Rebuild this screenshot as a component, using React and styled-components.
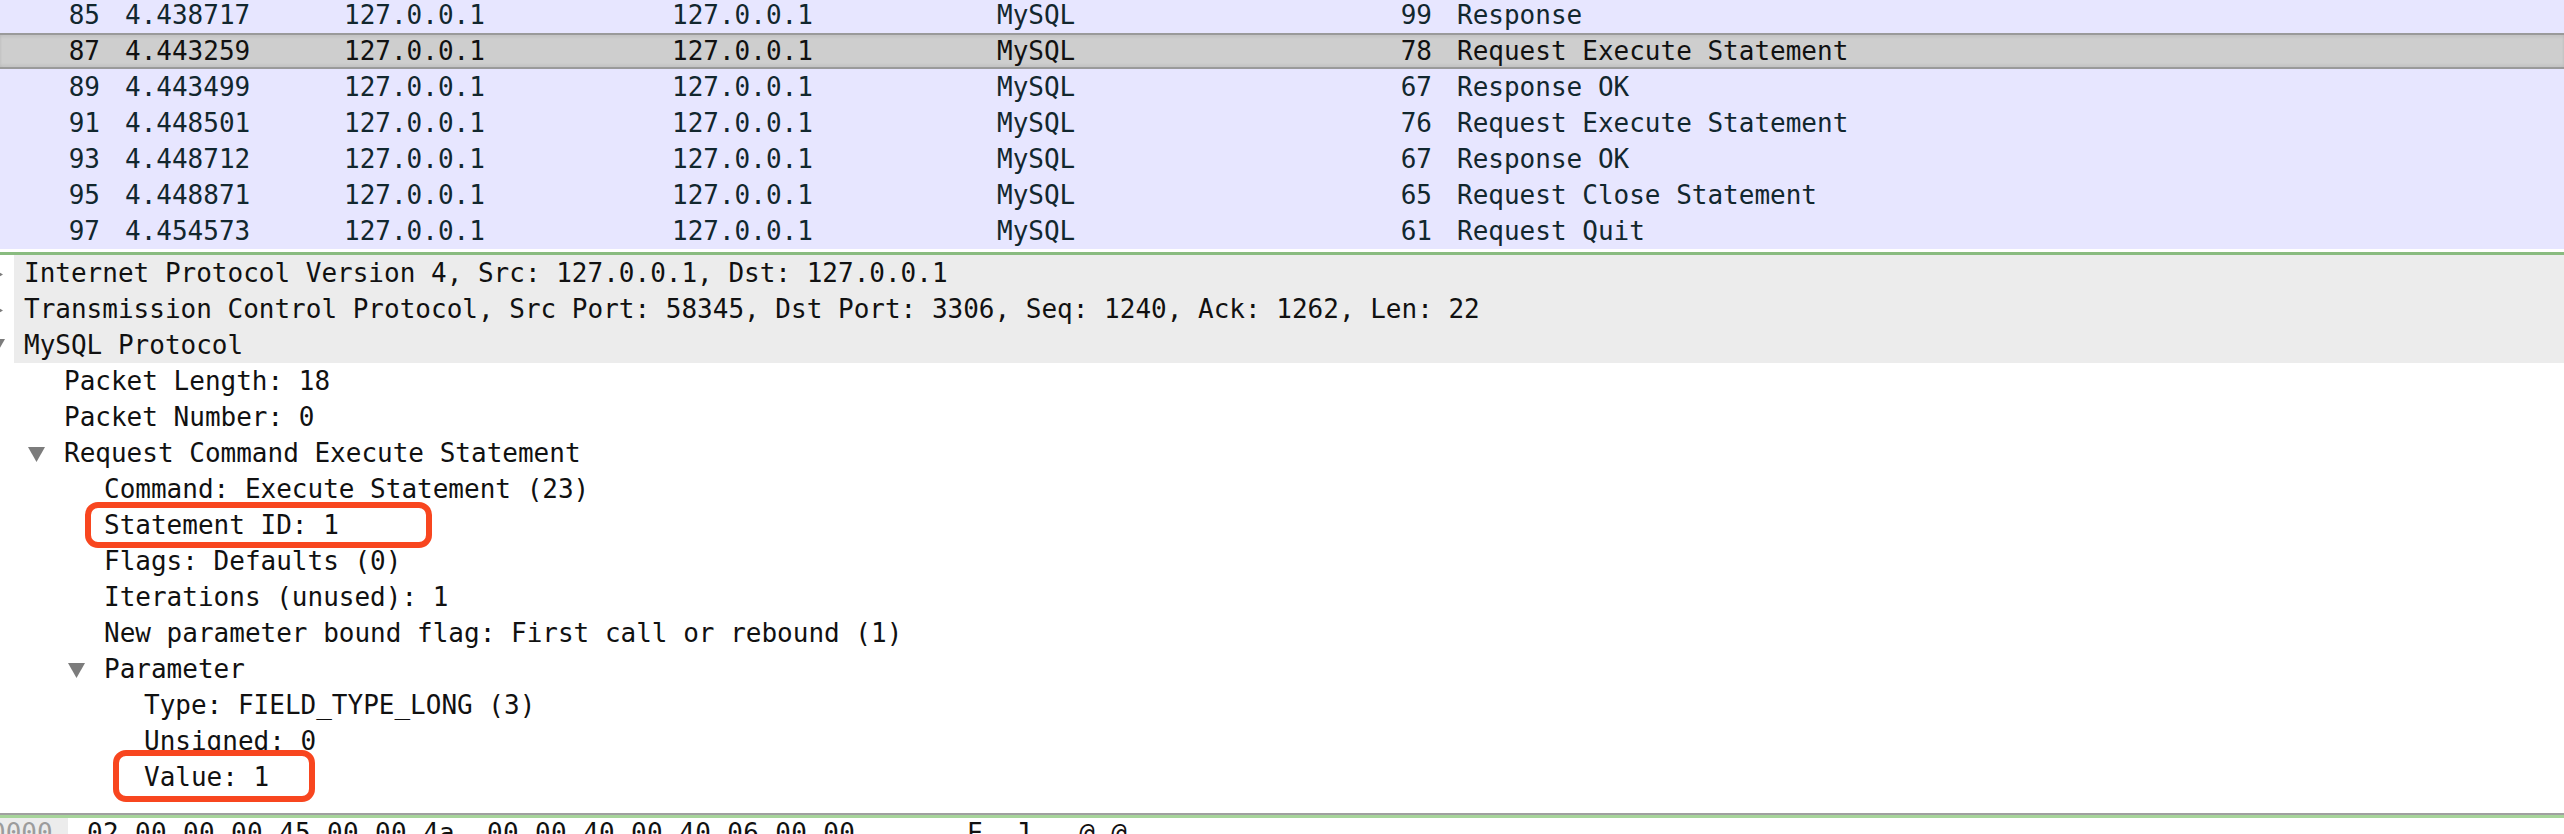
import styled, { createGlobalStyle } from "styled-components";

const GlobalStyle = createGlobalStyle`
  html, body {
    margin: 0;
    padding: 0;
    background: #ffffff;
    overflow: hidden;
  }
  body {
    font-family: "DejaVu Sans Mono", "Liberation Mono", monospace;
    font-size: 26px;
  }
`;

const Window = styled.div`
  width: 2564px;
  height: 834px;
  display: flex;
  flex-direction: column;
  overflow: hidden;
  background: #ffffff;
`;

const PacketList = styled.div`
  margin-top: -3px;
  background: #e7e6ff;
  color: #12272e;
`;

const PacketRow = styled.div`
  display: grid;
  grid-template-columns: 100px 244px 328px 325px 383px 52px 1fr;
  height: 36px;
  line-height: 36px;
  white-space: pre;
  box-sizing: border-box;
  ${({ selected }) =>
    selected &&
    `
    background: #cecece;
    color: #111111;
    border-top: 2px solid #9a9a9a;
    border-bottom: 2px solid #9a9a9a;
    line-height: 32px;
    box-shadow: inset 0 2px 3px rgba(0, 0, 0, 0.06), inset 0 -2px 3px rgba(0, 0, 0, 0.06);
  `}
`;

const Cell = styled.div`
  text-align: ${({ right }) => (right ? "right" : "left")};
  padding-left: ${({ pad }) => (pad ? "25px" : "0")};
  overflow: hidden;
`;

const Divider = styled.div`
  height: 3px;
  background: ${({ color }) => color};
  border-top: ${({ gap }) => gap}px solid ${({ edge }) => edge};
  flex: none;
`;

const DetailPane = styled.div`
  position: relative;
  height: 558px;
  flex: none;
  color: #111111;
`;

const TreeRow = styled.div`
  position: relative;
  display: flex;
  height: 36px;
  line-height: 36px;
  white-space: pre;
`;

const ToggleSlot = styled.div`
  flex: none;
  width: 26px;
  margin-left: ${({ depth }) => depth * 40 - 12}px;
  display: flex;
  align-items: center;
  padding-top: 3px;
  box-sizing: border-box;
`;

const Label = styled.div`
  flex: 1;
  padding-left: 10px;
  background: ${({ top }) => (top ? "#ececec" : "transparent")};
`;

const Mark = styled.div`
  position: absolute;
  left: ${({ x }) => x}px;
  top: ${({ y }) => y}px;
  width: ${({ w }) => w}px;
  height: ${({ h }) => h}px;
  box-sizing: border-box;
  border: 6px solid #f8461f;
  border-radius: 13px;
  pointer-events: none;
`;

const HexPane = styled.div`
  flex: 1;
  display: flex;
  line-height: 30px;
  white-space: pre;
  color: #111111;
  overflow: hidden;
`;

const Offset = styled.div`
  width: 68px;
  flex: none;
  background: #ececec;
  color: #9c9c9c;
  text-indent: -10px;
  overflow: hidden;
`;

const HexBytes = styled.div`
  padding-left: 19px;
  letter-spacing: 0.35px;
`;

const Arrow = ({ open }) =>
  open ? (
    <svg width="17" height="15" viewBox="0 0 17 15">
      <polygon points="0,0 17,0 8.5,15" fill="#7c7c7c" />
    </svg>
  ) : (
    <svg width="15" height="17" viewBox="0 0 15 17">
      <polygon points="0,0 15,8.5 0,17" fill="#7c7c7c" />
    </svg>
  );

const packets = [
  ["85", "4.438717", "99", "Response"],
  ["87", "4.443259", "78", "Request Execute Statement", true],
  ["89", "4.443499", "67", "Response OK"],
  ["91", "4.448501", "76", "Request Execute Statement"],
  ["93", "4.448712", "67", "Response OK"],
  ["95", "4.448871", "65", "Request Close Statement"],
  ["97", "4.454573", "61", "Request Quit"],
];

const tree = [
  { d: 0, t: "Internet Protocol Version 4, Src: 127.0.0.1, Dst: 127.0.0.1", arrow: "closed" },
  {
    d: 0,
    t: "Transmission Control Protocol, Src Port: 58345, Dst Port: 3306, Seq: 1240, Ack: 1262, Len: 22",
    arrow: "closed",
  },
  { d: 0, t: "MySQL Protocol", arrow: "open" },
  { d: 1, t: "Packet Length: 18" },
  { d: 1, t: "Packet Number: 0" },
  { d: 1, t: "Request Command Execute Statement", arrow: "open" },
  { d: 2, t: "Command: Execute Statement (23)" },
  { d: 2, t: "Statement ID: 1", mark: { x: 85, y: -5, w: 347, h: 46 } },
  { d: 2, t: "Flags: Defaults (0)" },
  { d: 2, t: "Iterations (unused): 1" },
  { d: 2, t: "New parameter bound flag: First call or rebound (1)" },
  { d: 2, t: "Parameter", arrow: "open" },
  { d: 3, t: "Type: FIELD_TYPE_LONG (3)" },
  { d: 3, t: "Unsigned: 0" },
  { d: 3, t: "Value: 1", mark: { x: 113, y: -9, w: 202, h: 52 } },
];

export default function App() {
  return (
    <>
      <GlobalStyle />
      <Window>
        <PacketList>
          {packets.map(([no, time, len, info, selected]) => (
            <PacketRow key={no} selected={selected}>
              <Cell right>{no}</Cell>
              <Cell pad>{time}</Cell>
              <Cell>127.0.0.1</Cell>
              <Cell>127.0.0.1</Cell>
              <Cell>MySQL</Cell>
              <Cell right>{len}</Cell>
              <Cell pad>{info}</Cell>
            </PacketRow>
          ))}
        </PacketList>
        <Divider color="#89bb7f" edge="#ffffff" gap={3} />
        <DetailPane>
          {tree.map((item, i) => (
            <TreeRow key={i}>
              <ToggleSlot depth={item.d}>
                {item.arrow && <Arrow open={item.arrow === "open"} />}
              </ToggleSlot>
              <Label top={item.d === 0}>{item.t}</Label>
              {item.mark && <Mark {...item.mark} />}
            </TreeRow>
          ))}
        </DetailPane>
        <Divider color="#a6d49a" edge="#a0a0a0" gap={2} />
        <HexPane>
          <Offset>0000</Offset>
          <HexBytes>02 00 00 00 45 00 00 4a  00 00 40 00 40 06 00 00   ....E..J ..@.@...</HexBytes>
        </HexPane>
      </Window>
    </>
  );
}
